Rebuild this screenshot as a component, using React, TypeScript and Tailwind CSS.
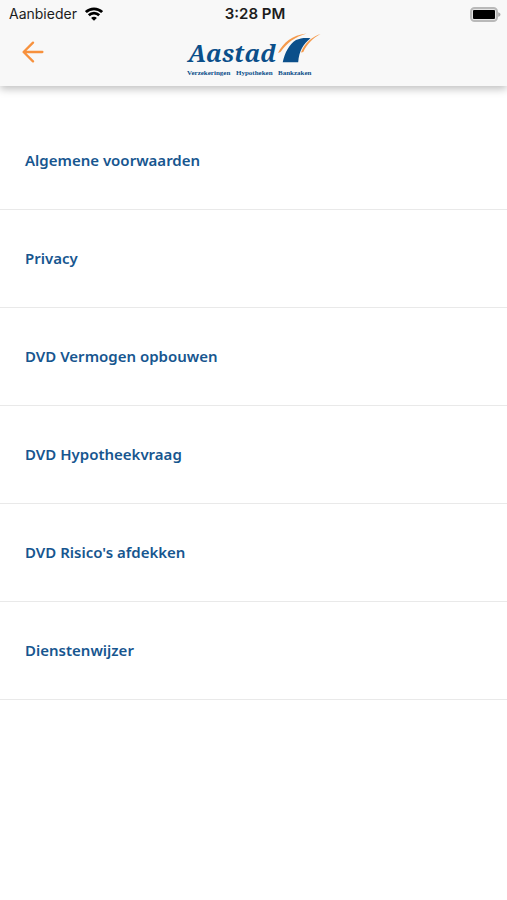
const documents = [
  "Algemene voorwaarden",
  "Privacy",
  "DVD Vermogen opbouwen",
  "DVD Hypotheekvraag",
  "DVD Risico's afdekken",
  "Dienstenwijzer",
];

const WifiIcon = () => (
  <svg viewBox="0 0 18 14" className="w-[18px] h-[14px]" fill="none" stroke="#000" strokeWidth="2.7">
    <path d="M0.9 5.1a11.6 11.6 0 0 1 16.2 0" />
    <path d="M3.8 8.3a7.4 7.4 0 0 1 10.4 0" />
    <path d="M9 13.8 6.1 10.9a4 4 0 0 1 5.8 0z" fill="#000" stroke="none" />
  </svg>
);

const BatteryIcon = () => (
  <svg viewBox="0 0 31 15" className="w-[31px] h-[15px]">
    <rect x="1" y="1" width="26" height="13" rx="3.6" fill="#e4e4e4" stroke="#b9b9b9" strokeWidth="2" />
    <rect x="3" y="3" width="22" height="9" rx="1" fill="#000" />
    <path d="M28.2 5.2c3 .9 3 3.7 0 4.6z" fill="#a8a8a8" />
  </svg>
);

const BackIcon = () => (
  <svg viewBox="0 0 22 22" className="w-[22px] h-[22px]" fill="none" stroke="#f7913d" strokeWidth="2.3" strokeLinecap="round" strokeLinejoin="round">
    <path d="M20.4 11H1.8M11 1.6 1.6 11l9.4 9.4" />
  </svg>
);

const Logo = () => (
  <svg viewBox="0 0 136 46" className="w-[136px] h-[46px]" role="img" aria-label="Aastad">
    <text x="2" y="30" fontSize="24" fontWeight="700" fontStyle="italic" fill="#0b4f8a" className="font-['Noto_Serif','Liberation_Serif',serif]">
      Aastad
    </text>
    {/* road with the orange verges */}
    <path d="M96.7 30.3C99 20.5 103 12.5 110 8c4.500-2 9-2.400 14.500-1.800-7 5.500-11.500 12.500-12.300 24.100z" fill="#0b4f8a" />
    <path d="M92 21C97 11 106 3.300 120.500 1.600 109 5 101 11 94.500 20z" fill="#f59a4c" />
    <path d="M134.500 2C127 4.500 119 10 115 20.500l2.300-.5C121 12 126.500 6.500 134.500 2z" fill="#f59a4c" />
    <text y="43" fontSize="7" fontWeight="700" fill="#0b4f8a" className="font-['Liberation_Serif',serif]">
      <tspan x="1">Verzekeringen</tspan>
      <tspan x="50">Hypotheken</tspan>
      <tspan x="92">Bankzaken</tspan>
    </text>
  </svg>
);

const App = () => {
  return (
    <div className="min-h-screen bg-white font-['Noto_Sans','Open_Sans',sans-serif]">
      <header className="bg-[#f8f8f8] shadow-[0_3px_8px_rgba(0,0,0,0.25)]">
        <div className="grid grid-cols-3 items-center h-7 pl-[9px] pr-1.5 font-['Inter',sans-serif] text-[14px] leading-5 text-[#1c1c1c]">
          <div className="flex items-center gap-2">
            <span>Aanbieder</span>
            <WifiIcon />
          </div>
          <span className="text-center text-[15px] font-semibold">3:28 PM</span>
          <div className="flex justify-end">
            <BatteryIcon />
          </div>
        </div>
        <div className="grid grid-cols-[1fr_auto_1fr] items-start h-[58px] px-[22px] pt-1">
          <button type="button" aria-label="Terug" className="justify-self-start pt-[9px]">
            <BackIcon />
          </button>
          <Logo />
        </div>
      </header>

      <nav className="pt-[26px]">
        <ul>
          {documents.map((title) => (
            <li key={title} className="border-b border-[#e9e9e9]">
              <a href="#" className="flex items-center h-[97px] px-[25px] text-[15px] font-semibold text-[#17568f]">
                {title}
              </a>
            </li>
          ))}
        </ul>
      </nav>
    </div>
  );
};

export default App;
